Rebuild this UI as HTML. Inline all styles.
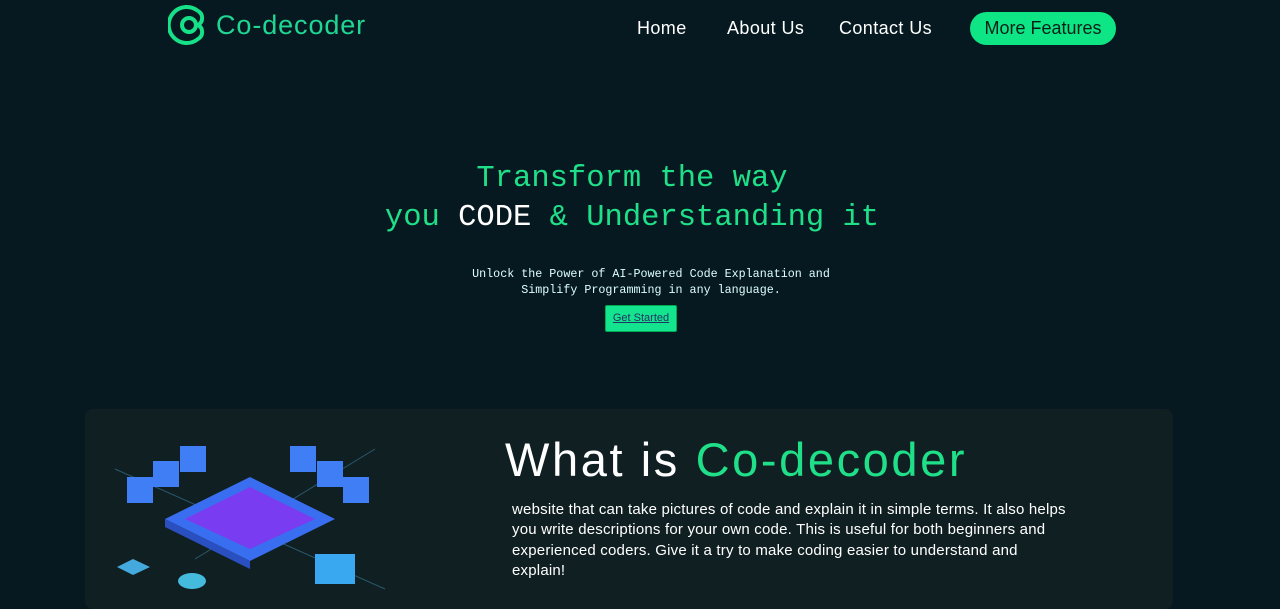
<!DOCTYPE html>
<html><head><style>
body{margin:0;width:1280px;height:594px;overflow:hidden;background:#061920;font-family:"Liberation Sans",sans-serif;position:relative}
.logo{position:absolute;left:168px;top:3px;display:flex;align-items:center}
.logo span{color:#1fd692;font-size:27px;margin-left:8px;letter-spacing:0.9px}
nav a{position:absolute;top:18px;color:#fff;font-size:18px;text-decoration:none;letter-spacing:.4px}
.btn{position:absolute;left:970px;top:12px;width:146px;height:33px;border-radius:17px;background:#0ee686;color:#062018;font-size:18px;text-align:center;line-height:33px}
h1{position:absolute;top:160px;left:0;width:1264px;text-align:center;margin:0;font-family:"Liberation Mono",monospace;font-weight:normal;font-size:30.5px;line-height:39px;color:#1fe088}
h1 b{color:#fff;font-weight:normal}
.sub{position:absolute;top:266px;left:0;width:1302px;text-align:center;font-family:"Liberation Mono",monospace;font-size:11.7px;line-height:16px;color:#dff}
.gs{position:absolute;left:605px;top:305px;width:72px;height:27px;background:#14e48d;border:1px solid #0a5;box-sizing:border-box;border-radius:2px;font-size:11px;color:#236;text-decoration:underline;text-align:center;line-height:25px}
.card{position:absolute;left:85px;top:409px;width:1088px;height:200px;background:#101f22;border-radius:8px}
h2{position:absolute;left:505px;top:432px;margin:0;font-weight:normal;font-size:47px;color:#fff;letter-spacing:2.6px}
h2 span{color:#1fe088}
.p{position:absolute;left:512px;top:500px;font-size:15px;line-height:20.3px;color:#fff;white-space:nowrap;letter-spacing:.2px}
</style></head><body>
<div class="logo"><svg width="40" height="44" viewBox="0 0 40 44"><path d="M30 8 A18 18 0 1 0 30 36 A8 8 0 0 0 30 22 A8 8 0 0 0 30 8" fill="none" stroke="#16e088" stroke-width="4"/><circle cx="21" cy="22" r="7" fill="none" stroke="#16e088" stroke-width="4"/></svg><span>Co-decoder</span></div>
<nav><a style="left:637px">Home</a><a style="left:727px">About Us</a><a style="left:839px">Contact Us</a></nav>
<div class="btn">More Features</div>
<h1>Transform the way<br>you <b>CODE</b> &amp; Understanding it</h1>
<div class="sub">Unlock the Power of AI-Powered Code Explanation and<br>Simplify Programming in any language.</div>
<div class="gs">Get Started</div>
<div class="card">
<svg width="320" height="185" style="position:absolute;left:0;top:0">
<g stroke="#3a7fa0" stroke-width="1" opacity=".6"><line x1="30" y1="60" x2="300" y2="180"/><line x1="290" y1="40" x2="110" y2="150"/></g>
<polygon points="165,68 250,110 165,152 80,110" fill="#3a6ef0"/>
<polygon points="165,78 230,110 165,140 100,110" fill="#7a3cf0"/>
<polygon points="80,110 165,152 165,160 80,118" fill="#2a4fc0"/>
<g fill="#3f7ef5"><rect x="42" y="68" width="26" height="26"/><rect x="68" y="52" width="26" height="26"/><rect x="95" y="37" width="26" height="26"/><rect x="205" y="37" width="26" height="26"/><rect x="232" y="52" width="26" height="26"/><rect x="258" y="68" width="26" height="26"/></g>
<rect x="230" y="145" width="40" height="30" fill="#3aa8f0"/>
<polygon points="48,150 65,158 48,166 32,158" fill="#4ad"/>
<ellipse cx="107" cy="172" rx="14" ry="8" fill="#4bd"/>
</svg></div>
<h2>What is <span>Co-decoder</span></h2>
<div class="p">website that can take pictures of code and explain it in simple terms. It also helps<br>you write descriptions for your own code. This is useful for both beginners and<br>experienced coders. Give it a try to make coding easier to understand and<br>explain!</div>
</body></html>
